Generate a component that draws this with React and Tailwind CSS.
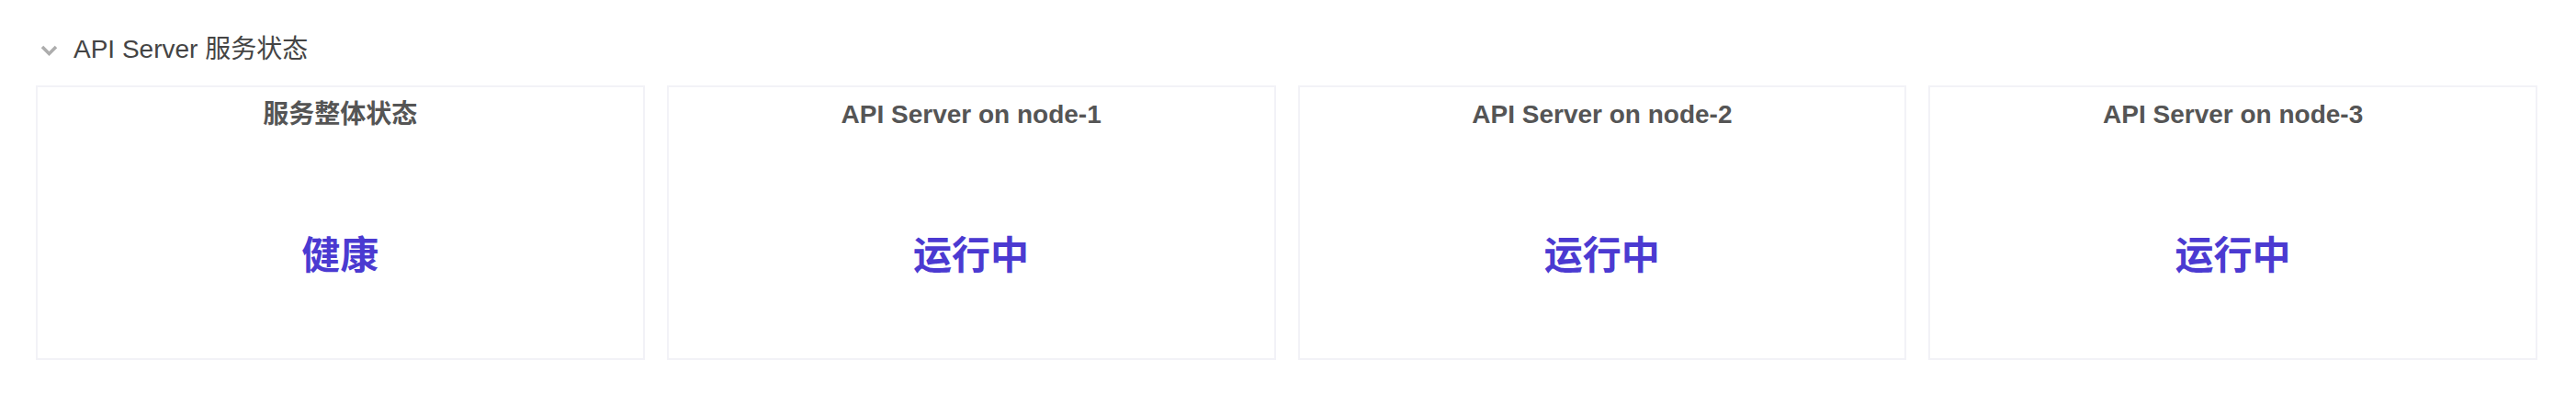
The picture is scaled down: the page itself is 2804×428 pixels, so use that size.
import React from 'react';

const cards = [
  { title: '服务整体状态', status: '健康' },
  { title: 'API Server on node-1', status: '运行中' },
  { title: 'API Server on node-2', status: '运行中' },
  { title: 'API Server on node-3', status: '运行中' },
];

const StatusCard = ({ title, status }) => (
  <div className="h-[299px] border-2 border-[#f2f2f7] bg-white flex flex-col items-center">
    <div className="pt-[9px] leading-[42px] text-[28px] font-bold text-[#555555]">{title}</div>
    <div className="mt-[112px] leading-[42px] text-[42px] font-bold text-[#4b3ad1]">{status}</div>
  </div>
);

export default function App() {
  return (
    <div
      className="w-[2804px] h-[428px] bg-white pl-[39px] pr-[42px]"
      style={{ fontFamily: '"Liberation Sans", "Noto Sans CJK SC", sans-serif' }}
    >
      {/* 标题：可折叠 */}
      <div className="pt-[35px] h-[73px] flex items-center">
        <svg width="19" height="12" viewBox="0 0 19 12" className="ml-[5px] mt-[2px]">
          <polyline points="2,2 9.5,9.5 17,2" fill="none" stroke="#adadad" strokeWidth="3.5" />
        </svg>
        <span className="ml-[17px] leading-[40px] text-[28px] text-[#444444]">API Server 服务状态</span>
      </div>

      {/* 卡片 */}
      <div className="mt-[20px] grid grid-cols-4 gap-[24px]">
        {cards.map((c) => (
          <StatusCard key={c.title} title={c.title} status={c.status} />
        ))}
      </div>
    </div>
  );
}
